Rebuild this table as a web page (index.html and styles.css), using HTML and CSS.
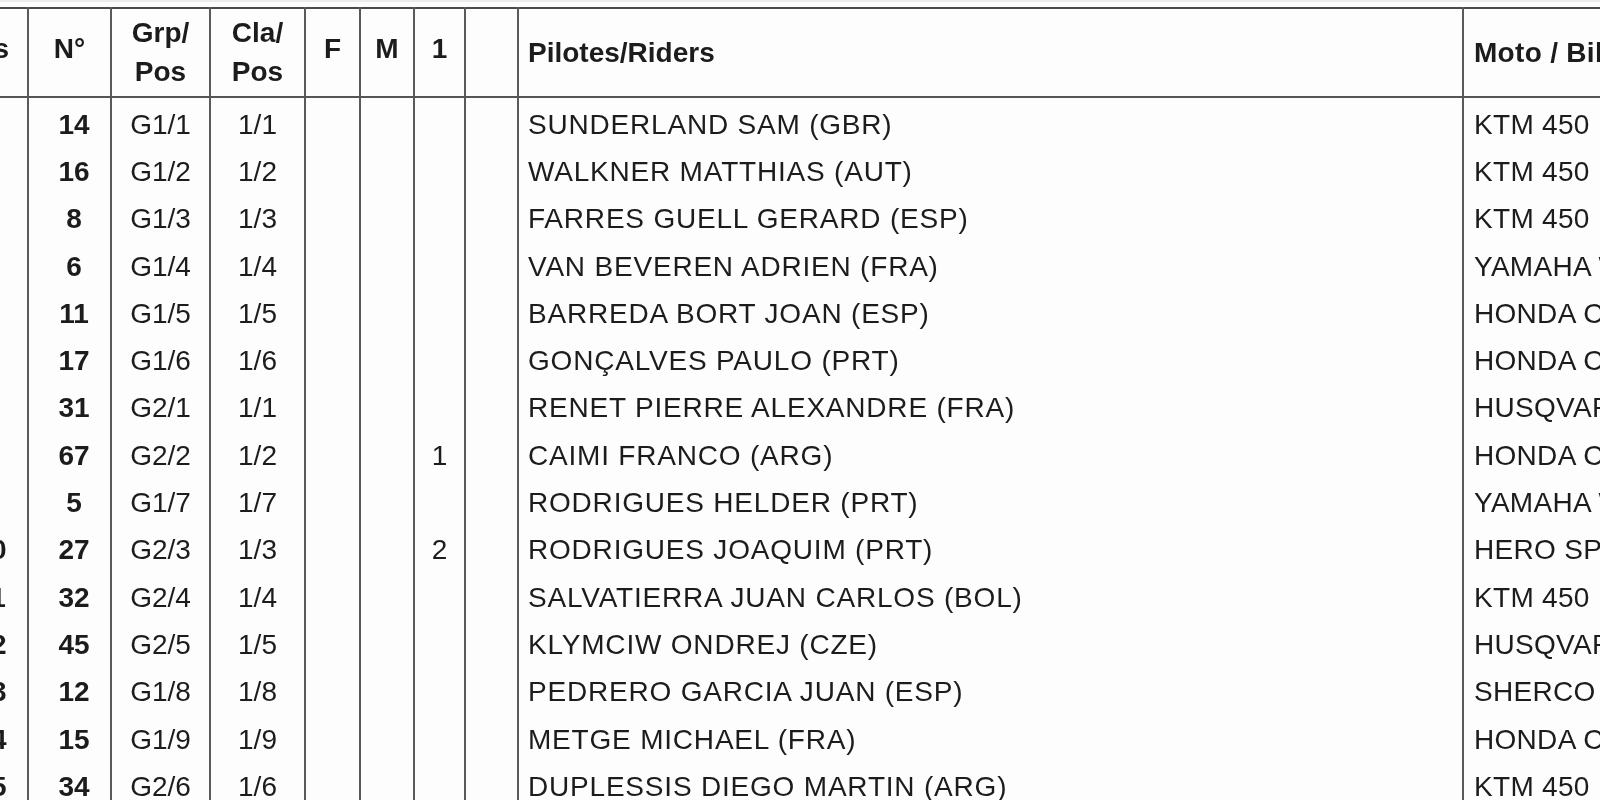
FILE: index.html
```html
<!DOCTYPE html>
<html lang="fr">
<head>
<meta charset="utf-8">
<title>Classement</title>
<link rel="stylesheet" href="styles.css">
</head>
<body>
<div class="page">
  <table class="results">
    <colgroup>
      <col class="c-pos"><col class="c-num"><col class="c-grp"><col class="c-cla"><col class="c-f"><col class="c-m"><col class="c-one"><col class="c-blank"><col class="c-rider"><col class="c-bike">
    </colgroup>
    <thead>
      <tr>
        <th class="pos">Pos</th>
        <th>N°</th>
        <th class="two">Grp/<br>Pos</th>
        <th class="two">Cla/<br>Pos</th>
        <th>F</th>
        <th>M</th>
        <th>1</th>
        <th></th>
        <th class="left low">Pilotes/Riders</th>
        <th class="left low bike">Moto / Bike</th>
      </tr>
    </thead>
    <tbody>
      <tr><td class="pos">1</td><td class="num">14</td><td>G1/1</td><td>1/1</td><td></td><td></td><td></td><td></td><td class="name">SUNDERLAND SAM (GBR)</td><td class="bike">KTM 450 RALLY</td></tr>
      <tr><td class="pos">2</td><td class="num">16</td><td>G1/2</td><td>1/2</td><td></td><td></td><td></td><td></td><td class="name">WALKNER MATTHIAS (AUT)</td><td class="bike">KTM 450 RALLY</td></tr>
      <tr><td class="pos">3</td><td class="num">8</td><td>G1/3</td><td>1/3</td><td></td><td></td><td></td><td></td><td class="name">FARRES GUELL GERARD (ESP)</td><td class="bike">KTM 450 RALLY</td></tr>
      <tr><td class="pos">4</td><td class="num">6</td><td>G1/4</td><td>1/4</td><td></td><td></td><td></td><td></td><td class="name">VAN BEVEREN ADRIEN (FRA)</td><td class="bike">YAMAHA WR450F</td></tr>
      <tr><td class="pos">5</td><td class="num">11</td><td>G1/5</td><td>1/5</td><td></td><td></td><td></td><td></td><td class="name">BARREDA BORT JOAN (ESP)</td><td class="bike">HONDA CRF 450 RALLY</td></tr>
      <tr><td class="pos">6</td><td class="num">17</td><td>G1/6</td><td>1/6</td><td></td><td></td><td></td><td></td><td class="name">GONÇALVES PAULO (PRT)</td><td class="bike">HONDA CRF 450 RALLY</td></tr>
      <tr><td class="pos">7</td><td class="num">31</td><td>G2/1</td><td>1/1</td><td></td><td></td><td></td><td></td><td class="name">RENET PIERRE ALEXANDRE (FRA)</td><td class="bike">HUSQVARNA 450 RALLY</td></tr>
      <tr><td class="pos">8</td><td class="num">67</td><td>G2/2</td><td>1/2</td><td></td><td></td><td>1</td><td></td><td class="name">CAIMI FRANCO (ARG)</td><td class="bike">HONDA CRF 450 RALLY</td></tr>
      <tr><td class="pos">9</td><td class="num">5</td><td>G1/7</td><td>1/7</td><td></td><td></td><td></td><td></td><td class="name">RODRIGUES HELDER (PRT)</td><td class="bike">YAMAHA WR450F</td></tr>
      <tr><td class="pos">10</td><td class="num">27</td><td>G2/3</td><td>1/3</td><td></td><td></td><td>2</td><td></td><td class="name">RODRIGUES JOAQUIM (PRT)</td><td class="bike">HERO SPEEDBRAIN</td></tr>
      <tr><td class="pos">11</td><td class="num">32</td><td>G2/4</td><td>1/4</td><td></td><td></td><td></td><td></td><td class="name">SALVATIERRA JUAN CARLOS (BOL)</td><td class="bike">KTM 450 RALLY</td></tr>
      <tr><td class="pos">12</td><td class="num">45</td><td>G2/5</td><td>1/5</td><td></td><td></td><td></td><td></td><td class="name">KLYMCIW ONDREJ (CZE)</td><td class="bike">HUSQVARNA 450 RALLY</td></tr>
      <tr><td class="pos">13</td><td class="num">12</td><td>G1/8</td><td>1/8</td><td></td><td></td><td></td><td></td><td class="name">PEDRERO GARCIA JUAN (ESP)</td><td class="bike">SHERCO TVS</td></tr>
      <tr><td class="pos">14</td><td class="num">15</td><td>G1/9</td><td>1/9</td><td></td><td></td><td></td><td></td><td class="name">METGE MICHAEL (FRA)</td><td class="bike">HONDA CRF 450 RALLY</td></tr>
      <tr><td class="pos">15</td><td class="num">34</td><td>G2/6</td><td>1/6</td><td></td><td></td><td></td><td></td><td class="name">DUPLESSIS DIEGO MARTIN (ARG)</td><td class="bike">KTM 450 RALLY</td></tr>
    </tbody>
  </table>
</div>
</body>
</html>
```

FILE: styles.css
```css
html, body {
  margin: 0;
  padding: 0;
  background: #fdfdfd;
}

.page {
  width: 1600px;
  height: 800px;
  overflow: hidden;
  padding-top: 5px;
  box-sizing: border-box;
  border-top: 2px solid #ececec;
}

.results {
  border-collapse: collapse;
  table-layout: fixed;
  width: 1817px;
  margin-left: -53px;
  font-family: "Liberation Sans", Arial, sans-serif;
  font-size: 28px;
  color: #1c1c1c;
  filter: blur(0.45px);
}

.c-pos { width: 80px; }
.c-num { width: 83px; }
.c-grp { width: 99px; }
.c-cla { width: 95px; }
.c-f { width: 55px; }
.c-m { width: 54px; }
.c-one { width: 51px; }
.c-blank { width: 53px; }
.c-rider { width: 945px; }
.c-bike { width: 302px; }

.results th,
.results td {
  border-left: 2px solid #5a5a5a;
  border-right: 2px solid #5a5a5a;
  padding: 0;
  text-align: center;
  white-space: nowrap;
  overflow: hidden;
}

.results thead th {
  height: 79px;
  border-top: 2px solid #4a4a4a;
  border-bottom: 2px solid #555;
  font-weight: bold;
  line-height: 39px;
  vertical-align: middle;
  padding-top: 0;
  padding-bottom: 8px;
}

.results thead th.two {
  padding-bottom: 2px;
  height: 85px;
}

.results thead th.low {
  padding-top: 0;
  padding-bottom: 0;
  height: 87px;
}

.results tbody td {
  height: 47.3px;
  line-height: 30px;
  vertical-align: middle;
}

.results tbody tr:first-child td {
  padding-top: 3px;
}

.results th.pos {
  text-align: right;
  padding-right: 18px;
}

.results td.pos {
  font-weight: bold;
  text-align: center;
  padding-left: 6px;
}

.results .num {
  font-weight: bold;
  padding-left: 9px;
}

.results .left,
.results .name {
  text-align: left;
  padding-left: 9px;
}

.results .name {
  letter-spacing: 0.8px;
}

.results .bike {
  text-align: left;
  padding-left: 10px;
  letter-spacing: 0.3px;
}
```
